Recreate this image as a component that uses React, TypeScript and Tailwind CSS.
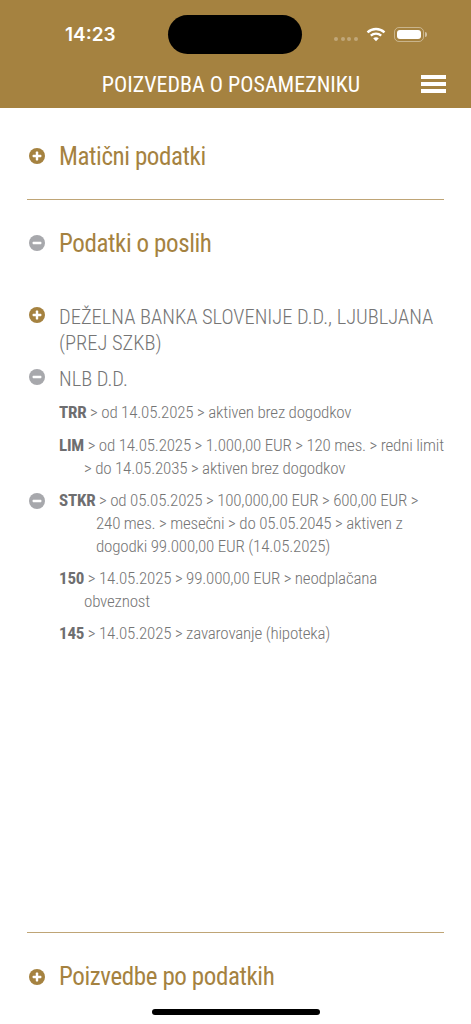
import React from "react";

function Toggle({ open, grey }: { open?: boolean; grey?: boolean }) {
  return (
    <svg width="16" height="16" viewBox="0 0 16 16" className="block shrink-0">
      <circle cx="8" cy="8" r="8" fill={grey ? "#a7a8ac" : "#a58240"} />
      <rect x="3.6" y="6.8" width="8.8" height="2.4" rx="0.6" fill="#fff" />
      {!open && <rect x="6.8" y="3.6" width="2.4" height="8.8" rx="0.6" fill="#fff" />}
    </svg>
  );
}

function Section({ label, open, iconClass }: { label: string; open?: boolean; iconClass: string }) {
  return (
    <div className="flex items-center h-[30px]">
      <div className={`w-[32px] pl-[2px] shrink-0 ${iconClass}`}>
        <Toggle open={open} grey={open} />
      </div>
      <div className="text-[25px] leading-[30px] tracking-[-0.4px] text-[#a58240] font-normal font-stretch-condensed">{label}</div>
    </div>
  );
}

function Detail({ label, indent, mt, children }: { label: string; indent: string; mt: string; children: React.ReactNode }) {
  return (
    <div className={`${mt} ${indent} text-[17px] leading-[23px] tracking-[-0.2px] font-light text-[#757575] font-stretch-condensed`}>
      <b className="font-bold text-[#6e6e70]">{label}</b> {children}
    </div>
  );
}

export default function App() {
  return (
    <div className="relative w-[471px] h-[1024px] bg-white overflow-hidden flex flex-col font-['Roboto',sans-serif]">
      <header className="h-[108px] bg-[#a58240] text-white shrink-0 flex flex-col">
        <div className="h-[39px] mt-[15px] flex items-center">
          <div className="w-[168px] pl-[65px] text-[19px] font-semibold font-['Inter',sans-serif] leading-[38px]">14:23</div>
          <div className="w-[134px] h-[39px] bg-black rounded-[20px]" />
          <div className="flex items-center pl-[32px] gap-[8px]">
            <div className="flex gap-[2.6px] mt-[9px]">
              <span className="w-[4px] h-[4px] rounded-full bg-white/30" />
              <span className="w-[4px] h-[4px] rounded-full bg-white/30" />
              <span className="w-[4px] h-[4px] rounded-full bg-white/30" />
              <span className="w-[4px] h-[4px] rounded-full bg-white/30" />
            </div>
            <svg width="20" height="15" viewBox="0 0 20 15" fill="none" className="-mt-[1px]">
              <path d="M1.5 5.3C6.4 .9 13.6 .9 18.5 5.3" stroke="#fff" strokeWidth="2.4" />
              <path d="M4.8 8.6c3-2.6 7.4-2.6 10.4 0" stroke="#fff" strokeWidth="2.4" />
              <path d="M7.2 11.3c1.700-1.300 3.900-1.300 5.600 0L10 14.200z" fill="#fff" />
            </svg>
            <div className="flex items-center gap-[1px]">
              <div className="w-[30px] h-[15px] rounded-[5px] border border-white/40 p-[2px]">
                <div className="w-full h-full rounded-[3px] bg-white" />
              </div>
              <div className="w-[2px] h-[5px] rounded-r bg-white/50" />
            </div>
          </div>
        </div>
        <div className="relative flex-1 flex items-center justify-center pt-[8px]">
          <div className="pr-[9px] text-[22px] leading-[32px] font-normal font-stretch-condensed">POIZVEDBA O POSAMEZNIKU</div>
          <div className="absolute left-[421px] top-[21px] w-[25px] flex flex-col gap-[3px]">
            <span className="h-[4px] bg-white" />
            <span className="h-[4px] bg-white" />
            <span className="h-[4px] bg-white" />
          </div>
        </div>
      </header>

      <main className="flex-1 flex flex-col px-[27px]">
        <div className="pt-[34px] pb-[27px] border-b border-[#bfa576]">
          <Section label="Matični podatki" iconClass="-mt-[2px]" />
        </div>
        <div className="pt-[29px]">
          <Section label="Podatki o poslih" open iconClass="-mt-[2px]" />
        </div>

        <div className="mt-[45px] flex">
          <div className="w-[32px] pl-[2px] pt-[3px] shrink-0"><Toggle /></div>
          <div className="text-[20.5px] leading-[26px] font-light text-[#757575] font-stretch-condensed">
            DEŽELNA BANKA SLOVENIJE D.D., LJUBLJANA<br />(PREJ SZKB)
          </div>
        </div>
        <div className="mt-[10px] flex">
          <div className="w-[32px] pl-[2px] pt-[3px] shrink-0"><Toggle open grey /></div>
          <div className="text-[20.5px] leading-[26px] font-light text-[#757575] font-stretch-condensed">NLB D.D.</div>
        </div>

        <div className="pl-[32px]">
          <Detail label="TRR" mt="mt-[9px]" indent="">&gt; od 14.05.2025 &gt; aktiven brez dogodkov</Detail>
          <Detail label="LIM" mt="mt-[10px]" indent="pl-[25px] -indent-[25px]">&gt; od 14.05.2025 &gt; 1.000,00 EUR &gt; 120 mes. &gt; redni limit &gt; do 14.05.2035 &gt; aktiven brez dogodkov</Detail>
        </div>
        <div className="flex">
          <div className="w-[32px] pl-[2px] pt-[13px] shrink-0"><Toggle open grey /></div>
          <Detail label="STKR" mt="mt-[9px]" indent="pl-[37px] -indent-[37px]">&gt; od 05.05.2025 &gt; 100,000,00 EUR &gt; 600,00 EUR &gt; 240 mes. &gt; mesečni &gt; do 05.05.2045 &gt; aktiven z dogodki 99.000,00 EUR (14.05.2025)</Detail>
        </div>
        <div className="pl-[32px]">
          <Detail label="150" mt="mt-[9px]" indent="pl-[25px] -indent-[25px]">&gt; 14.05.2025 &gt; 99.000,00 EUR &gt; neodplačana obveznost</Detail>
          <Detail label="145" mt="mt-[9px]" indent="">&gt; 14.05.2025 &gt; zavarovanje (hipoteka)</Detail>
        </div>

        <div className="mt-auto mb-[32px] border-t border-[#bfa576] pt-[29px]">
          <Section label="Poizvedbe po podatkih" iconClass="" />
        </div>
      </main>

      <div className="absolute left-[152px] bottom-[9px] w-[168px] h-[6px] rounded-full bg-black" />
    </div>
  );
}
